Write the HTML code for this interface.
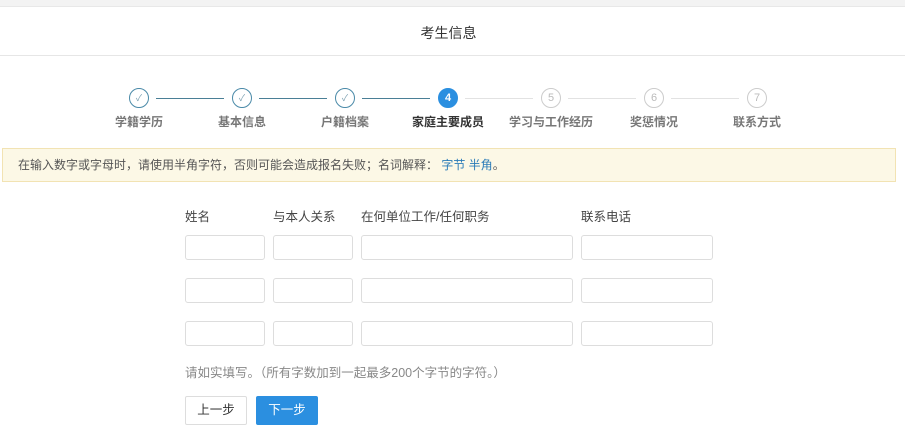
<!DOCTYPE html>
<html><head><meta charset="utf-8"><style>
*{margin:0;padding:0;box-sizing:border-box}
body{width:905px;height:439px;background:#fff;font-family:"Liberation Sans","Noto Sans CJK SC",sans-serif;position:relative;overflow:hidden;color:#333}
.a{position:absolute}
.top{left:0;top:0;width:905px;height:7px;background:#f3f3f3;border-bottom:1px solid #e8e8e8}
.hd{left:0;top:55px;width:905px;height:1px;background:#e6e6e6}
.title{left:-4px;width:905px;top:23px;text-align:center;font-size:14px;color:#333}
.c{width:20px;height:20px;border-radius:50%;border:1px solid #4a8aa8;background:#fff;font-size:11px;text-align:center;line-height:18px;color:#4a8aa8}
.c.ck{font-size:9px;color:#7a9fb0}
.c.cur{background:#2b8fe0;border-color:#2b8fe0;color:#fff;font-weight:bold}
.c.fut{border-color:#ccc;color:#bbb}
.ln{height:1px;top:98px}
.lb{top:113px;width:120px;text-align:center;font-size:12px;color:#777;font-weight:bold}
.lb.cur{color:#333}
.note{left:2px;top:148px;width:894px;height:34px;background:#fcf8e6;border:1px solid #f2e3b3;font-size:12px;line-height:32px;padding-left:15px;color:#555}
.note span{color:#2a7bb8}
.fl{top:206px;font-size:12.5px;color:#444}
.in{height:25px;border:1px solid #ddd;border-radius:3px;background:#fff}
.tip{left:185px;top:362px;font-size:12.5px;color:#888}
.btn{top:396px;height:29px;width:62px;border-radius:2px;font-size:12.5px;text-align:center;line-height:27px}
</style></head><body>
<div class="a top"></div>
<div class="a title">考生信息</div>
<div class="a hd"></div>

<div class="a ln" style="left:156px;width:68px;background:#4a7f96"></div>
<div class="a ln" style="left:259px;width:68px;background:#4a7f96"></div>
<div class="a ln" style="left:362px;width:68px;background:#4a7f96"></div>
<div class="a ln" style="left:465px;width:68px;background:#e2e2e2"></div>
<div class="a ln" style="left:568px;width:68px;background:#e2e2e2"></div>
<div class="a ln" style="left:671px;width:68px;background:#e2e2e2"></div>

<div class="a c ck" style="left:129px;top:88px">✓</div>
<div class="a c ck" style="left:232px;top:88px">✓</div>
<div class="a c ck" style="left:335px;top:88px">✓</div>
<div class="a c cur" style="left:438px;top:88px">4</div>
<div class="a c fut" style="left:541px;top:88px">5</div>
<div class="a c fut" style="left:644px;top:88px">6</div>
<div class="a c fut" style="left:747px;top:88px">7</div>

<div class="a lb" style="left:79px">学籍学历</div>
<div class="a lb" style="left:182px">基本信息</div>
<div class="a lb" style="left:285px">户籍档案</div>
<div class="a lb cur" style="left:388px">家庭主要成员</div>
<div class="a lb" style="left:491px">学习与工作经历</div>
<div class="a lb" style="left:594px">奖惩情况</div>
<div class="a lb" style="left:697px">联系方式</div>

<div class="a note">在输入数字或字母时，请使用半角字符，否则可能会造成报名失败；名词解释： <span>字节 半角</span>。</div>

<div class="a fl" style="left:185px">姓名</div>
<div class="a fl" style="left:273px">与本人关系</div>
<div class="a fl" style="left:361px">在何单位工作/任何职务</div>
<div class="a fl" style="left:581px">联系电话</div>

<div class="a in" style="left:185px;top:235px;width:80px"></div>
<div class="a in" style="left:273px;top:235px;width:80px"></div>
<div class="a in" style="left:361px;top:235px;width:212px"></div>
<div class="a in" style="left:581px;top:235px;width:132px"></div>
<div class="a in" style="left:185px;top:278px;width:80px"></div>
<div class="a in" style="left:273px;top:278px;width:80px"></div>
<div class="a in" style="left:361px;top:278px;width:212px"></div>
<div class="a in" style="left:581px;top:278px;width:132px"></div>
<div class="a in" style="left:185px;top:321px;width:80px"></div>
<div class="a in" style="left:273px;top:321px;width:80px"></div>
<div class="a in" style="left:361px;top:321px;width:212px"></div>
<div class="a in" style="left:581px;top:321px;width:132px"></div>

<div class="a tip">请如实填写。（所有字数加到一起最多200个字节的字符。）</div>

<div class="a btn" style="left:185px;border:1px solid #ddd;color:#333">上一步</div>
<div class="a btn" style="left:256px;background:#2b8fe0;border:1px solid #2b8fe0;color:#fff">下一步</div>
</body></html>
